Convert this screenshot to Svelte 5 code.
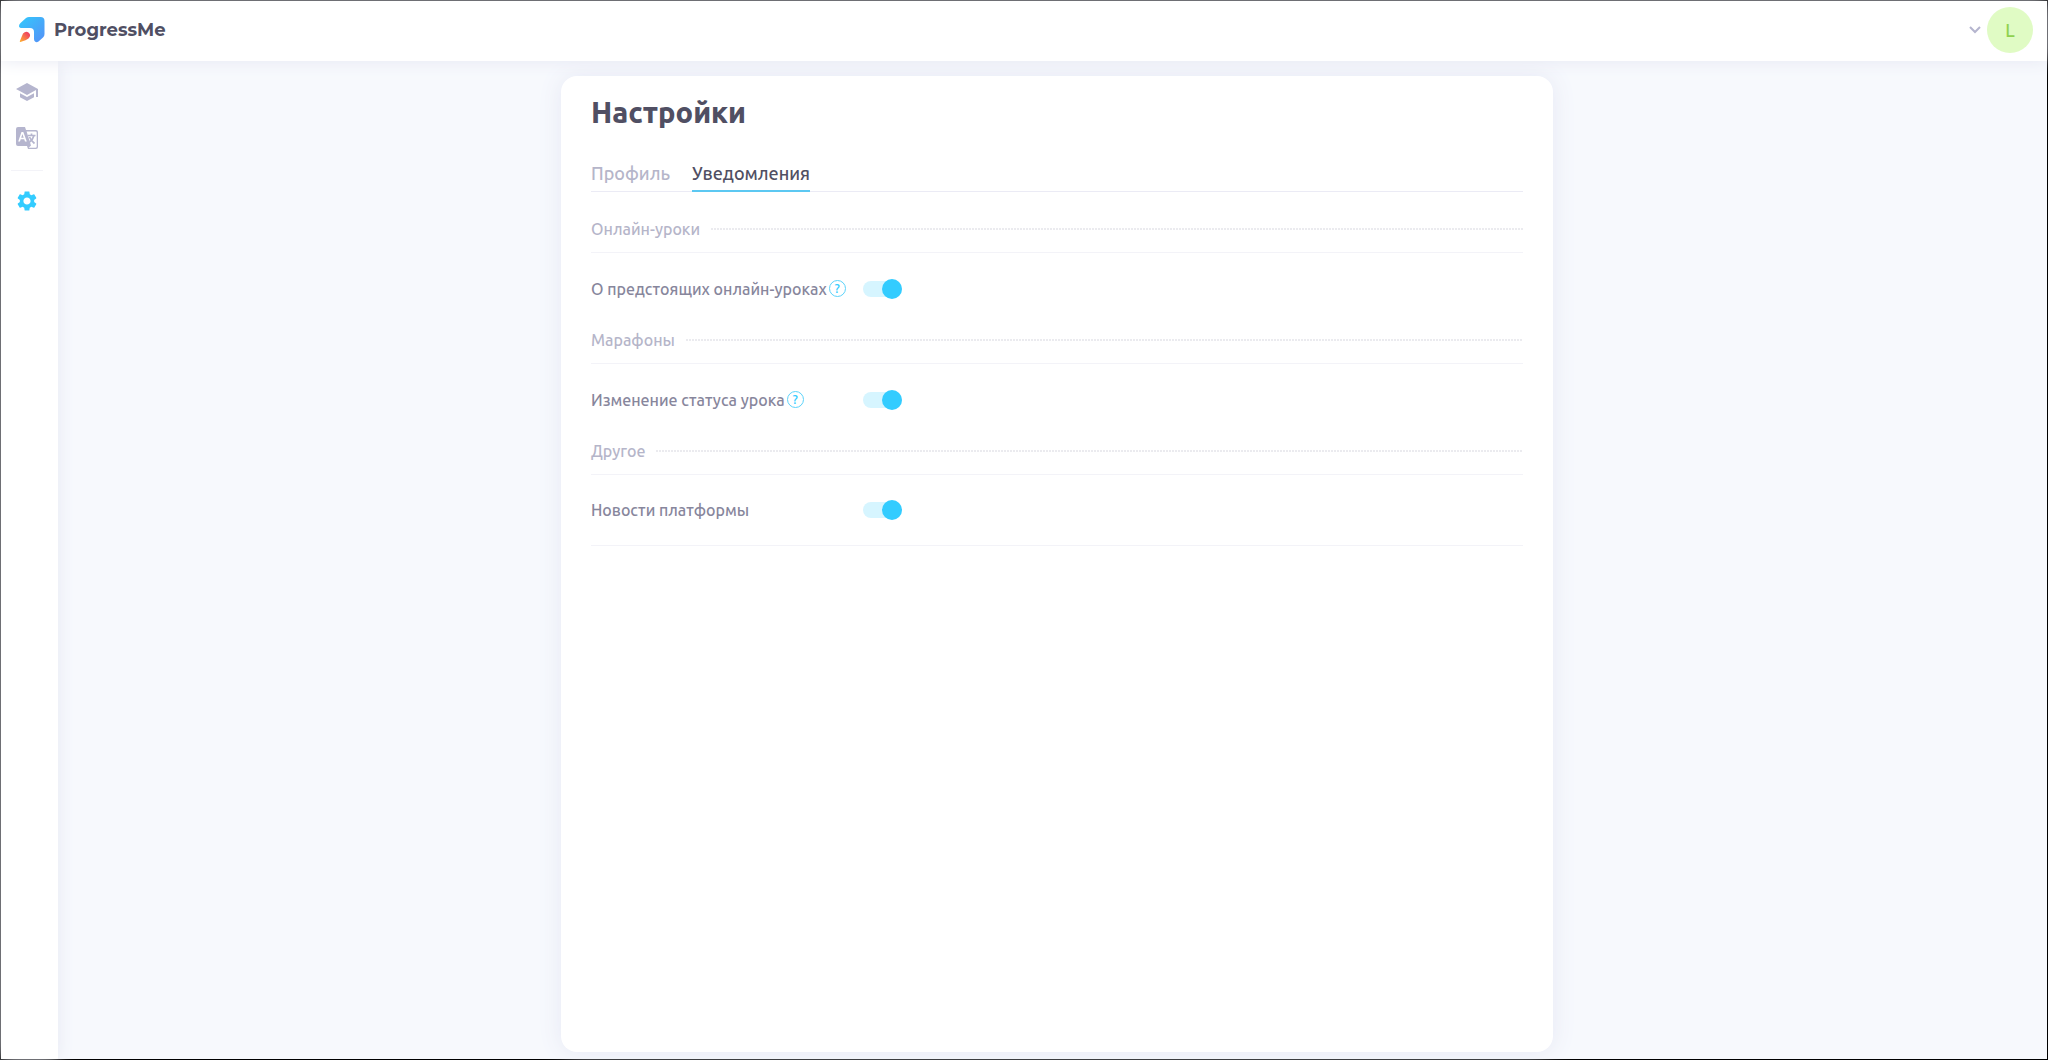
<script lang="ts">
	const tabs = [
		{ title: 'Профиль', href: '#profile', active: false },
		{ title: 'Уведомления', href: '#notifications', active: true }
	];

	let sections = $state([
		{
			title: 'Онлайн-уроки',
			items: [{ id: 'lessons', label: 'О предстоящих онлайн-уроках', help: true, on: true }]
		},
		{
			title: 'Марафоны',
			items: [{ id: 'status', label: 'Изменение статуса урока', help: true, on: true }]
		},
		{
			title: 'Другое',
			items: [{ id: 'news', label: 'Новости платформы', help: false, on: true }]
		}
	]);
</script>

<div class="page">
	<header class="topbar">
		<a class="logo" href="#home">
			<svg width="26" height="26" viewBox="0 0 26 26" aria-hidden="true">
				<defs>
					<linearGradient id="wing" x1="0" y1="0" x2="1" y2="1">
						<stop offset="0" stop-color="#33c9fc" />
						<stop offset="1" stop-color="#5590f7" />
					</linearGradient>
					<linearGradient id="flame" x1="1" y1="0" x2="0" y2="1">
						<stop offset="0.2" stop-color="#f0455f" />
						<stop offset="1" stop-color="#ffb52e" />
					</linearGradient>
				</defs>
				<path
					fill="url(#wing)"
					d="M7 1Q8.500 0 10 0H21.500Q25.500 0 25.500 4V17Q25.500 19 24 20.500L19.500 24.500Q17.500 26 16 24.500Q15 23.500 15 22V15Q15 11 11 11H3Q0 11 0 9Q0 7.500 1.500 6Z"
				/>
				<path
					fill="url(#flame)"
					d="M4 16.500Q7 13.200 9.800 15.800Q12.500 18.500 9.500 21.500Q7.500 23 1.500 25Q0.500 25.300 0.900 24Z"
				/>
			</svg>
			<span>ProgressMe</span>
		</a>
		<button class="account" aria-label="Account">
			<svg width="12" height="8" viewBox="0 0 12 8" aria-hidden="true">
				<path d="M1 1L6 6L11 1" fill="none" stroke="#b5b5ce" stroke-width="2" />
			</svg>
			<span class="avatar">L</span>
		</button>
	</header>

	<div class="layout">
		<nav class="sidebar">
			<a href="#courses" aria-label="Courses">
				<svg width="24" height="24" viewBox="0 0 24 24" aria-hidden="true">
					<path fill="currentColor" d="M5 13.180v4L12 21l7-3.820v-4L12 17l-7-3.820zM12 3L1 9l11 6 9-4.910V17h2V9L12 3z" />
				</svg>
			</a>
			<a href="#dictionary" aria-label="Dictionary">
				<svg width="22" height="22" viewBox="0 0 22 22" aria-hidden="true">
					<path
						fill="currentColor"
						fill-rule="evenodd"
						d="M2 0H9L10 3H20Q22 3 22 5V20Q22 22 20 22H12L11 19H2Q0 19 0 17V2Q0 0 2 0ZM10.600 4.500L15 18.500L12.700 20.700H19.500Q20.700 20.700 20.700 19.500V5.700Q20.700 4.500 19.500 4.500ZM5.500 5L2.200 14.500H4L4.700 12.200H8.200L9 14.500H10.800L7.300 5ZM6.400 7L7.700 10.800H5.200Z"
					/>
					<path d="M12 8.500H19.500M15.500 6.500V8.500M18 8.500Q17 12.500 13.500 15M13.500 10Q15 13.500 18.500 16.500" fill="none" stroke="currentColor" stroke-width="1.700" />
				</svg>
			</a>
			<hr />
			<a class="current" href="#settings" aria-label="Settings">
				<svg width="24" height="24" viewBox="0 0 24 24" aria-hidden="true">
					<path
						fill="currentColor"
						d="M19.140 12.940c.04-.3.06-.61.06-.94 0-.32-.02-.64-.07-.94l2.030-1.580c.18-.14.23-.41.12-.61l-1.920-3.320c-.12-.22-.37-.29-.59-.22l-2.390.96c-.5-.38-1.030-.7-1.620-.94l-.36-2.540c-.04-.24-.24-.41-.48-.41h-3.840c-.24 0-.43.17-.47.41l-.36 2.540c-.59.24-1.130.57-1.620.94l-2.390-.96c-.22-.08-.47 0-.59.22L2.740 8.870c-.12.21-.08.47.12.61l2.030 1.580c-.05.3-.09.63-.09.94s.02.64.07.94l-2.030 1.580c-.18.14-.23.41-.12.61l1.920 3.320c.12.22.37.29.59.22l2.390-.96c.5.38 1.030.7 1.620.94l.36 2.540c.05.24.24.41.48.41h3.840c.24 0 .44-.17.47-.41l.36-2.540c.59-.24 1.130-.56 1.620-.94l2.390.96c.22.08.47 0 .59-.22l1.920-3.320c.12-.22.07-.47-.12-.61l-2.010-1.580zM12 15.600c-1.980 0-3.600-1.620-3.600-3.600s1.620-3.600 3.600-3.600 3.600 1.620 3.600 3.600-1.620 3.600-3.600 3.600z"
					/>
				</svg>
			</a>
		</nav>

		<main>
			<div class="card">
				<h1>Настройки</h1>
				<div class="tabs">
					{#each tabs as tab}
						<a href={tab.href} class:active={tab.active}>{tab.title}</a>
					{/each}
				</div>
				{#each sections as section}
					<section>
						<h2>{section.title}</h2>
						{#each section.items as item}
							<div class="row">
								<div class="label">
									<label for={item.id}>{item.label}</label>
									{#if item.help}
										<button class="help" aria-label="Help">?</button>
									{/if}
								</div>
								<input id={item.id} type="checkbox" role="switch" bind:checked={item.on} />
							</div>
						{/each}
					</section>
				{/each}
			</div>
		</main>
	</div>
</div>

<style>
	:global(body) {
		margin: 0;
	}

	.page {
		display: flex;
		flex-direction: column;
		box-sizing: border-box;
		min-height: 100vh;
		border: 1px solid #000;
		background: #f7f9fd;
		color: #504f63;
		font-family: Ubuntu, 'Noto Sans', sans-serif;
		font-size: 16px;
	}

	a {
		color: inherit;
		text-decoration: none;
	}

	button {
		padding: 0;
		border: 0;
		background: none;
		font-family: inherit;
		cursor: pointer;
	}

	.topbar {
		display: flex;
		position: relative;
		z-index: 2;
		justify-content: space-between;
		align-items: center;
		box-sizing: border-box;
		height: 60px;
		padding: 0 14px 2px 18px;
		background: #fff;
		box-shadow: 0 0 16px #e6e8f2;
	}

	.logo {
		display: flex;
		align-items: center;
		gap: 9px;
		font-family: Montserrat, Inter, sans-serif;
		font-size: 18px;
		font-weight: 700;
		line-height: 20px;
	}

	.account {
		display: flex;
		align-items: center;
		gap: 6px;
	}

	.avatar {
		width: 46px;
		border-radius: 50%;
		background: #e0fbc4;
		color: #8fd14f;
		font-size: 18px;
		font-weight: 500;
		line-height: 46px;
	}

	.layout {
		display: flex;
		flex: 1;
	}

	.sidebar {
		display: flex;
		position: relative;
		z-index: 1;
		flex-direction: column;
		align-items: center;
		box-sizing: border-box;
		width: 57px;
		padding: 19px 5px 0 0;
		background: #fff;
		box-shadow: 0 0 16px #e6e8f2;
		color: #b5b5ce;
	}

	.sidebar a {
		display: grid;
		place-items: center;
		width: 24px;
		height: 24px;
		margin-bottom: 22px;
	}

	.sidebar hr {
		width: 32px;
		margin: -2px 0 18px;
		border: 0;
		border-top: 1px solid #f3f3f8;
	}

	.sidebar .current {
		color: #33ccff;
	}

	main {
		display: flex;
		flex: 1;
		justify-content: center;
		padding: 15px 0 7px 9px;
	}

	.card {
		box-sizing: border-box;
		width: 100%;
		max-width: 992px;
		padding: 16px 30px 31px;
		border-radius: 16px;
		background: #fff;
		box-shadow: 0 0 24px #e6e8f4;
	}

	h1 {
		margin: 0 0 24px;
		font-size: 29px;
		font-weight: 800;
		line-height: 40px;
	}

	.tabs {
		display: flex;
		gap: 22px;
		margin-bottom: 21px;
		border-bottom: 1px solid #ebebf5;
		color: #b5b5c9;
		font-size: 18px;
		font-weight: 500;
		line-height: 34px;
	}

	.tabs a {
		margin-bottom: -1px;
		border-bottom: 2px solid transparent;
	}

	.tabs .active {
		border-color: #5cc8f2;
		color: #504f63;
	}

	h2 {
		display: flex;
		align-items: center;
		gap: 11px;
		margin: 0;
		padding: 6px 0 13px;
		border-bottom: 1px solid #f3f3f8;
		color: #b5b5c9;
		font-size: 16px;
		font-weight: 500;
		line-height: 20px;
	}

	h2::after {
		content: '';
		flex: 1;
		height: 2px;
		background: repeating-linear-gradient(90deg, #ebebef 0 2px, transparent 2px 3px);
	}

	.row {
		display: flex;
		align-items: center;
		box-sizing: border-box;
		height: 71px;
	}

	section:last-child .row {
		border-bottom: 1px solid #f3f3f8;
	}

	.label {
		display: flex;
		align-items: center;
		gap: 2px;
		width: 272px;
		color: #87869c;
		font-weight: 500;
		line-height: 20px;
	}

	.help {
		width: 17px;
		height: 17px;
		border: 1px solid #5cd3fa;
		border-radius: 50%;
		color: #33ccff;
		font-size: 13px;
		font-weight: 500;
		line-height: 15px;
	}

	input {
		appearance: none;
		display: flex;
		align-items: center;
		width: 39px;
		height: 16px;
		margin: 0;
		border-radius: 8px;
		background: #d6f5ff;
		cursor: pointer;
	}

	input::before {
		content: '';
		width: 20px;
		height: 20px;
		border-radius: 50%;
		background: #b5b5ce;
	}

	input:checked::before {
		margin-left: auto;
		background: #33ccff;
	}
</style>
